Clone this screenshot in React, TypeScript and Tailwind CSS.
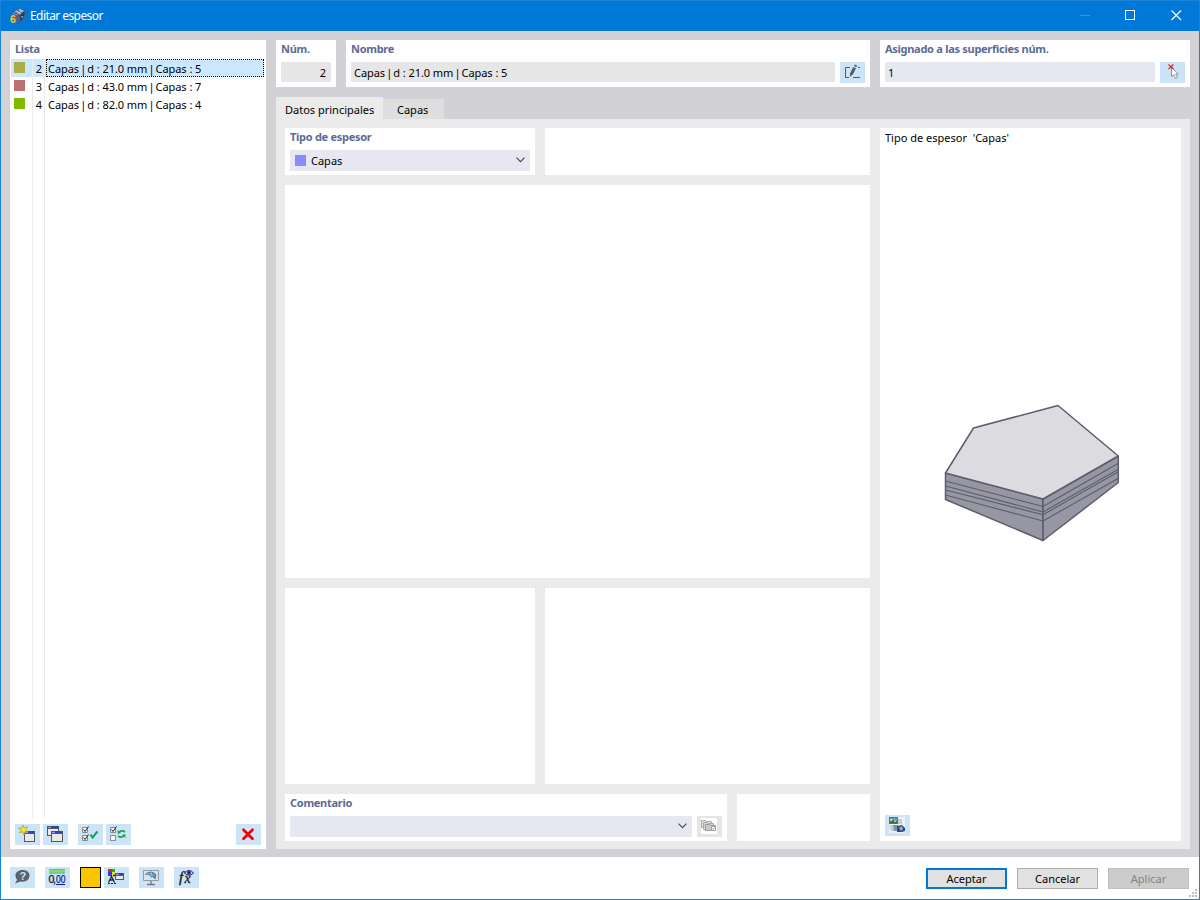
import { Fragment, useState } from 'react'
import type { ReactNode } from 'react'

interface Thickness {
  id: number
  name: string
  swatch: string
}

const THICKNESSES: Thickness[] = [
  { id: 2, name: 'Capas | d : 21.0 mm | Capas : 5', swatch: 'bg-[#abad42]' },
  { id: 3, name: 'Capas | d : 43.0 mm | Capas : 7', swatch: 'bg-[#bb7072]' },
  { id: 4, name: 'Capas | d : 82.0 mm | Capas : 4', swatch: 'bg-[#7fb900]' },
]

interface IconButtonProps {
  label: string
  className?: string
  children: ReactNode
}

function IconButton({ label, className = 'bg-[#cce4f7]', children }: IconButtonProps) {
  return (
    <button aria-label={label} className={`block shrink-0 w-[25px] h-[21px] ${className}`}>
      <svg className="block w-[25px] h-[21px]" viewBox="0 0 25 21" fill="none">
        {children}
      </svg>
    </button>
  )
}

/* Thickness name with its separators set tight */
function ThicknessName({ name }: { name: string }) {
  return (
    <span className="tracking-[-0.06px] whitespace-pre">
      {name.split('|').map((part, i) => (
        <Fragment key={i}>
          {i > 0 && <span className="-mx-[1.7px]">|</span>}
          {part}
        </Fragment>
      ))}
    </span>
  )
}

function Label({ children }: { children: ReactNode }) {
  return <div className="h-[22px] font-bold leading-[17px] tracking-[-0.28px] text-[#5b6b93] whitespace-nowrap">{children}</div>
}

function Chevron() {
  return (
    <svg className="mb-px w-[9px] h-[6px]" viewBox="0 0 9 6" fill="none" stroke="#4a4a4f" strokeWidth="1.2">
      <path d="M0.5 0.7 4.5 4.7 8.5 0.7" />
    </svg>
  )
}

/* Small window glyph shared by several toolbar icons */
function MiniWindow({ x, y, w, h }: { x: number; y: number; w: number; h: number }) {
  return (
    <g shapeRendering="crispEdges">
      <rect x={x} y={y} width={w} height={h} fill="#55585c" />
      <rect x={x + 1} y={y + 3} width={w - 2} height={h - 4} fill="#e9e9ea" />
      <rect x={x + 1} y={y + 1} width={w - 2} height={1} fill="#9aa3d8" />
      <rect x={x + 4} y={y} width={w - 5} height={2} fill="#2a3fd2" />
    </g>
  )
}

function AppIcon() {
  return (
    <svg className="ml-px w-4 h-4" viewBox="0 0 16 16">
      <path d="M2.500 6 6 2l4.500-1.500L15 3v5l-3 5-5 2-4-4z" fill="#53627e" />
      <path d="M3 6 6.500 2l4-1L14 3l-4 4z" fill="#a9b6cc" />
      <path d="m10 7 4.500-4v4L11 13z" fill="#2c3a58" />
      <path d="m4 4.500 6 2.500m-3.500-5 5.500 3M10 7l1 6m1-8 2 3M8.500 1.500 5 6" stroke="#26324c" strokeWidth=".7" fill="none" />
      <path d="m6.500 4 1-1m2 1.500 1-1m1 6 1-1.500" stroke="#eef5ff" />
      <text x="0" y="14.500" fontFamily="Liberation Sans, sans-serif" fontWeight="700" fontSize="10.500" fill="#f5c530">6</text>
    </svg>
  )
}

function TitleBar() {
  return (
    <header className="h-[31px] shrink-0 flex items-center bg-[#0078d7] border border-b-0 border-[#1883d7] pl-2 text-white">
      <AppIcon />
      <span className="ml-1 text-[12px] tracking-[-0.58px]">Editar espesor</span>
      <div className="ml-auto flex items-center pb-px pr-[17px] gap-[35px]">
        <svg className="w-[11px] h-[11px]" viewBox="0 0 11 11"><path d="M1 5.500h10" stroke="#3994df" /></svg>
        <svg className="w-[11px] h-[11px]" viewBox="0 0 11 11"><rect x=".5" y=".5" width="9" height="9" fill="none" stroke="#fff" /></svg>
        <svg className="w-[11px] h-[11px]" viewBox="0 0 11 11"><path d="m.5.5 9.500 9.500m0-9.500-9.500 9.500" stroke="#fff" strokeWidth="1.100" /></svg>
      </div>
    </header>
  )
}

function ThicknessList() {
  const [selected, setSelected] = useState(2)

  return (
    <aside className="w-[256px] shrink-0 flex flex-col bg-white">
      <div className="h-[19px] shrink-0 pl-[5px] font-bold leading-[17px] tracking-[-0.28px] text-[#5b6b93]">Lista</div>
      <div className="ml-px mr-[2px] h-[760px] flex flex-col">
        {THICKNESSES.map((t) => {
          const active = t.id === selected
          return (
            <div key={t.id} onClick={() => setSelected(t.id)} className={`h-[18px] shrink-0 flex ${active ? 'bg-[#cce8ff]' : ''}`}>
              <div className="w-[22px] border-r border-[#ebebeb] pl-[3px] pt-[3px]">
                <div className={`w-[11px] h-[11px] ${t.swatch}`} />
              </div>
              <div className="w-3 border-r border-[#ebebeb] pt-px text-right leading-[18px] pr-[2px]">{t.id}</div>
              <div className={`ml-px flex-1 border pl-px leading-[18px] whitespace-nowrap ${active ? 'border-dotted border-black' : 'border-transparent'}`}>
                <ThicknessName name={t.name} />
              </div>
            </div>
          )
        })}
        <div className="flex-1 flex">
          <div className="w-[22px] border-r border-[#ebebeb]" />
          <div className="w-3 border-r border-[#ebebeb]" />
        </div>
      </div>
      <div className="mt-[5px] pl-[5px] pr-[5px] flex">
        <IconButton label="Nuevo">
          <MiniWindow x={9} y={7} w={11} h={11} />
          <path d="m8 1 1.400 3 3.300-1.300-1.700 3 2.400 2.200-3.300-.3L9 11 7.700 7.700 4.300 8.800l2-2.600-2.700-2.500 3.200.5z" fill="#f5ec27" stroke="#9b8c22" strokeWidth=".6" />
        </IconButton>
        <div className="w-[3px]" />
        <IconButton label="Copiar">
          <MiniWindow x={4} y={2} w={12} h={10} />
          <MiniWindow x={8} y={7} w={12} h={11} />
        </IconButton>
        <div className="w-[10px]" />
        <IconButton label="Seleccionar todo">
          <path d="M4.500 3.500h5v5h-5zM4.500 11.500h5v5h-5z" fill="#f5f5f5" stroke="#8b8b8b" />
          <path d="m5.500 5.500 1.500 2 3.500-5m-5 11 1.500 2 3.500-5" stroke="#222" />
          <path d="m12.500 10.500 2 3 5-6" stroke="#12a45c" strokeWidth="2" />
        </IconButton>
        <div className="w-[3px]" />
        <IconButton label="Invertir selección">
          <path d="M4.500 3.500h5v5h-5zM4.500 11.500h5v5h-5z" fill="#f5f5f5" stroke="#8b8b8b" />
          <path d="m5.500 5.500 1.500 2 3.500-5" stroke="#222" />
          <path d="M13 8.500c1.500-2 4-2 6-.5M18 11.500c-1.500 2-4 2-6 .5" stroke="#219e5c" strokeWidth="1.700" />
          <path d="m11.500 6 .3 4 3.200-1zM19.500 14l-.3-4-3.200 1z" fill="#219e5c" />
        </IconButton>
        <IconButton label="Eliminar" className="ml-auto bg-[#cce4f7]">
          <path d="m7.500 5.700 9 9m0-9-9 9" stroke="#fb0000" strokeWidth="2.800" strokeLinecap="round" />
        </IconButton>
      </div>
    </aside>
  )
}

function TopFields() {
  return (
    <div className="h-[47px] shrink-0 flex gap-[10px]">
      <div className="w-[60px] bg-white px-[5px]">
        <Label>Núm.</Label>
        <div className="h-5 bg-[#e6e6e6] pr-[5px] pt-px text-right leading-5">2</div>
      </div>
      <div className="w-[524px] bg-white px-[5px]">
        <Label>Nombre</Label>
        <div className="flex gap-[5px]">
          <div className="h-5 flex-1 bg-[#e6e6e6] pl-[3px] pt-px leading-5">
            <ThicknessName name={THICKNESSES[0].name} />
          </div>
          <IconButton label="Editar nombre">
            <path d="M10 5.500H5.500v10H9M13 15.500h7M18 5.500h2" stroke="#555a5f" />
            <path d="m9.800 15 .4-4 3-6 2.800 1.300-3 6zM14 4l.8-1.500 2.300 1.100-.7 1.600z" fill="#5b5b5b" />
          </IconButton>
        </div>
      </div>
      <div className="w-[310px] bg-white px-[5px]">
        <Label>Asignado a las superficies núm.</Label>
        <div className="flex gap-[5px]">
          <div className="h-5 flex-1 bg-[#e7e7f1] pl-[3px] pt-px leading-5">1</div>
          <IconButton label="Seleccionar superficies">
            <path d="M11.500 5.500v9l2.200-1.800 1.800 3.800 1.900-1-1.800-3.500h2.700z" fill="#fff" stroke="#858a92" strokeWidth=".9" />
            <path d="m8.500 2.500 5 4.500m0-4.500-5 4.500" stroke="#e8262c" strokeWidth="1.300" />
          </IconButton>
        </div>
      </div>
    </div>
  )
}

function LayersDrawing() {
  return (
    <svg className="w-[176px] h-[138px]" viewBox="944 404 176 138" stroke="#5d5c70" strokeLinejoin="round">
      <path d="M945.500 473 1043 499V540.500L945.500 499.500z" fill="#9797a3" strokeWidth="1.500" />
      <path d="M1043 499 1118.300 456V482.500L1043 540.500z" fill="#9797a3" strokeWidth="1.500" />
      <path d="M973.500 428 1058 405.500 1118.300 456 1043 499 945.500 473z" fill="#dcdce0" strokeWidth="1.500" />
      <path
        d="M945.500 481 1043 506.500 1118 463.500M945.500 486 1043 512 1118 469.500M945.500 490 1043 514.700 1118 472M945.500 495 1043 521 1118 478.500"
        fill="none"
        strokeWidth="1.100"
      />
    </svg>
  )
}

function MainTab() {
  return (
    <div className="flex-1 bg-[#ebebeb] flex gap-[10px] pl-[9px] pr-[9px] pt-[9px] pb-2">
      <div className="w-[585px] flex flex-col gap-[10px]">
        <div className="h-[47px] flex gap-[10px]">
          <div className="w-[250px] bg-white px-[5px]">
            <Label>Tipo de espesor</Label>
            <div className="h-[21px] flex items-center bg-[#e7e7f1] pl-[5px] pr-[5px]">
              <div className="w-[11px] h-[11px] bg-[#8a8aff]" />
              <span className="ml-[5px] pt-px flex-1">Capas</span>
              <Chevron />
            </div>
          </div>
          <div className="flex-1 bg-white" />
        </div>
        <div className="h-[393px] bg-white" />
        <div className="h-[196px] flex gap-[10px]">
          <div className="w-[250px] bg-white" />
          <div className="flex-1 bg-white" />
        </div>
        <div className="h-[47px] flex gap-[10px]">
          <div className="w-[442px] bg-white px-[5px]">
            <Label>Comentario</Label>
            <div className="flex gap-[5px]">
              <div className="h-[21px] flex-1 flex items-center justify-end bg-[#e7e7f1] pr-[5px]">
                <Chevron />
              </div>
              <IconButton label="Comentarios guardados" className="bg-[#e6e6e6]">
                <path d="M4 2h16v16H4z" fill="#fff" />
                <path d="M4.500 4.500h4l1 1h5v6h-10z" fill="#dedede" stroke="#b0b0b0" />
                <path d="M6.500 6.500h4l1 1h5v6h-10z" fill="#d6d6d6" stroke="#a8a8a8" />
                <path d="M8.500 8.500h4l1 1h5v5h-10z" fill="#c9c9c9" stroke="#999" />
                <path d="M14.500 10.500h4v4h-4z" fill="#f5f5f5" stroke="#a4a4a4" />
                <path d="m15.500 13.500 2-2" stroke="#999" />
              </IconButton>
            </div>
          </div>
          <div className="flex-1 bg-white" />
        </div>
      </div>
      <div className="flex-1 bg-white flex flex-col">
        <div className="h-[276px] pl-[5px] pt-px leading-[17px] whitespace-pre">Tipo de espesor  'Capas'</div>
        <div className="pl-[64px]">
          <LayersDrawing />
        </div>
        <div className="mt-auto pl-[5px] pb-[5px]">
          <IconButton label="Imagen">
            <path d="M4 2h16v16H4z" fill="#eef1f4" />
            <path d="M4 2h9v7H4z" fill="#5c7a45" />
            <path d="M5 3h7v3H5z" fill="#60a6bd" />
            <path d="m5 8 3-3 2 2 1-1 1 2z" fill="#307034" />
            <path d="M5 4h2v2H5zM9 6h2v1H9z" fill="#e9d945" />
            <path d="M13 4h4v5h-4z" fill="#c5d3b8" />
            <path d="M4 10h7v6H6z" fill="#c7ced8" />
            <path d="M8 10h5v6H9z" fill="#7992b1" />
            <path d="m12 11 5-1 3 3v3l-3 1h-5z" fill="#304b78" />
            <path d="m14 13 3-2 1 3-2 2z" fill="#8fb0da" />
          </IconButton>
        </div>
      </div>
    </div>
  )
}

function Footer() {
  return (
    <footer className="h-[43px] shrink-0 bg-white border-x border-b border-[#1883d7] flex items-start pl-[9px] pt-[10px] relative">
      <IconButton label="Ayuda">
        <path d="M12.500 3c-4 0-7 2.300-7 5.500 0 2 .7 3.200 1.700 4.200L5 16.500l5.500-2c5 1 9-1.500 9-6C19.500 5.200 16.500 3 12.500 3z" fill="#5d6064" />
        <text x="9.500" y="12.500" fontSize="11" fontWeight="700" fontFamily="Liberation Sans, sans-serif" fill="#cce4f7">?</text>
      </IconButton>
      <div className="w-[10px]" />
      <IconButton label="Unidades">
        <path d="M4 2h16v5H4z" fill="#83d77e" />
        <path d="M4 2.500h16M6.500 5v2M9.500 5v2M12.500 5v2M15.500 5v2M18.500 5v2" stroke="#6abf68" />
        <text x="3.500" y="16" fontSize="10.500" textLength="7.500" stroke="#111" strokeWidth=".25" fontFamily="Liberation Sans, sans-serif" fill="#111">0,</text>
        <text x="11" y="16" fontSize="10.500" textLength="9.500" lengthAdjust="spacingAndGlyphs" stroke="#15158c" strokeWidth=".25" fontFamily="Liberation Sans, sans-serif" fill="#15158c">00</text>
        <path d="M11 17.500h9" stroke="#15158c" />
      </IconButton>
      <div className="w-[10px]" />
      <button aria-label="Color" className="w-[21px] h-[21px] bg-[#f9c500] border border-black" />
      <div className="w-[3px]" />
      <IconButton label="Visualización">
        <g shapeRendering="crispEdges">
          <path d="M4 2h4v3H4z" fill="#ee1c24" />
          <path d="M8 2h3v3H8z" fill="#29a82f" />
          <path d="M4 5h4v4H4z" fill="#273ee8" />
          <path d="M8 5h3v4H8z" fill="#f2df1c" />
          <path d="M4 16h2v1H4zM7 16h2v1H7zM10 16h2v1h-2z" fill="#222" />
        </g>
        <path d="m4.500 15.500 3-6 3 6M6 13h4M9 8.500h3" stroke="#222" strokeWidth="1.300" />
        <MiniWindow x={11} y={6} w={9} h={7} />
      </IconButton>
      <div className="w-[10px]" />
      <IconButton label="Vista">
        <path d="M4.500 3.500h15v10h-15z" fill="#d4e6f2" stroke="#959ca0" />
        <path d="M5.500 7.500Q11.500 1.500 17.500 7.500l-1 5-3-2.500-2 1 0-2.500-3-.5z" fill="#547fa5" />
        <path d="M7.500 7q5-2 8.500 2M12 5l1 5" stroke="#adcbdc" strokeWidth=".8" />
        <path d="M12 14v3M8 17.500h8" stroke="#777" strokeWidth="1.300" />
      </IconButton>
      <div className="w-[10px]" />
      <IconButton label="Fórmula">
        <text x="5" y="15" fontSize="15" fontStyle="italic" stroke="#111" strokeWidth=".3" fontFamily="Liberation Serif, serif" fill="#111">f</text>
        <text x="10.500" y="16" fontSize="14" fontStyle="italic" stroke="#222" strokeWidth=".3" fontFamily="Liberation Serif, serif" fill="#222">x</text>
        <path d="M10.500 6q4.500-5 9 0-4.500 4.500-9 0z" fill="#c8cbe3" stroke="#28284e" />
        <circle cx="15" cy="5.800" r="1.900" fill="#25256d" />
      </IconButton>
      <div className="ml-auto mr-[10px] mt-px flex gap-[10px]">
        <button className="w-[81px] h-[21px] bg-[#e1e1e1] border-2 border-[#0078d7] leading-[17px]">Aceptar</button>
        <button className="w-[81px] h-[21px] bg-[#e1e1e1] border border-[#adadad] leading-[19px]">Cancelar</button>
        <button className="w-[81px] h-[21px] bg-[#cccccc] border border-[#bfbfbf] leading-[19px] text-[#838383]">Aplicar</button>
      </div>
      {/* Resize grip */}
      <svg className="absolute right-[2px] bottom-[2px] w-2 h-2" viewBox="0 0 8 8" fill="#bfbfbf">
        <path d="M6 0h2v2H6zM3 3h2v2H3zM6 3h2v2H6zM0 6h2v2H0zM3 6h2v2H3zM6 6h2v2H6z" />
      </svg>
    </footer>
  )
}

export default function App() {
  return (
    <div className="w-[1200px] h-[900px] overflow-hidden flex flex-col font-['Noto_Sans',sans-serif] text-[11px] text-black">
      <TitleBar />
      <main className="h-[826px] shrink-0 flex gap-[10px] bg-[#d2d1d6] border-x border-[#1883d7] pl-[9px] pr-[9px] pt-[9px] pb-2">
        <ThicknessList />
        <div className="flex-1 flex flex-col">
          <TopFields />
          <div className="mt-[10px] h-[22px] shrink-0 flex items-end">
            <div className="w-[107px] h-[22px] bg-[#ebebeb] pl-[9px] pt-[2px] leading-[22px] whitespace-nowrap">Datos principales</div>
            <div className="w-[61px] h-5 bg-[#dedede] pl-[14px] leading-[22px]">Capas</div>
          </div>
          <MainTab />
        </div>
      </main>
      <Footer />
    </div>
  )
}
